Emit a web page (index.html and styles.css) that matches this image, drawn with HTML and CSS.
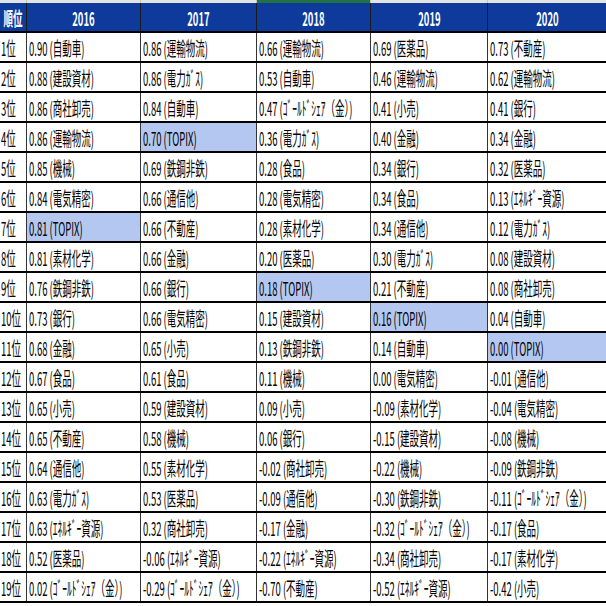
FILE: index.html
```html
<!DOCTYPE html>
<html lang="ja">
<head>
<meta charset="utf-8">
<title>順位表</title>
<link rel="stylesheet" href="styles.css">
</head>
<body>
<div class="sheet">
  <div class="row strip">
    <div class="c"></div><div class="c"></div><div class="c"></div><div class="c sel"></div><div class="c"></div><div class="c"></div>
  </div>
  <div class="row head">
    <div class="c"><span class="t">順位</span></div>
    <div class="c"><span class="t">2016</span></div>
    <div class="c"><span class="t">2017</span></div>
    <div class="c"><span class="t">2018</span></div>
    <div class="c"><span class="t">2019</span></div>
    <div class="c"><span class="t">2020</span></div>
  </div>
  <div class="row"><div class="c rk"><span class="t">1位</span></div><div class="c"><span class="t">0.90 (自動車)</span></div><div class="c"><span class="t">0.86 (運輸物流)</span></div><div class="c"><span class="t">0.66 (運輸物流)</span></div><div class="c"><span class="t">0.69 (医薬品)</span></div><div class="c"><span class="t">0.73 (不動産)</span></div></div>
  <div class="row"><div class="c rk"><span class="t">2位</span></div><div class="c"><span class="t">0.88 (建設資材)</span></div><div class="c"><span class="t">0.86 (電力ｶﾞｽ)</span></div><div class="c"><span class="t">0.53 (自動車)</span></div><div class="c"><span class="t">0.46 (運輸物流)</span></div><div class="c"><span class="t">0.62 (運輸物流)</span></div></div>
  <div class="row"><div class="c rk"><span class="t">3位</span></div><div class="c"><span class="t">0.86 (商社卸売)</span></div><div class="c"><span class="t">0.84 (自動車)</span></div><div class="c"><span class="t">0.47 (ｺﾞｰﾙﾄﾞｼｪｱ（金）)</span></div><div class="c"><span class="t">0.41 (小売)</span></div><div class="c"><span class="t">0.41 (銀行)</span></div></div>
  <div class="row"><div class="c rk"><span class="t">4位</span></div><div class="c"><span class="t">0.86 (運輸物流)</span></div><div class="c hl"><span class="t">0.70 (TOPIX)</span></div><div class="c"><span class="t">0.36 (電力ｶﾞｽ)</span></div><div class="c"><span class="t">0.40 (金融)</span></div><div class="c"><span class="t">0.34 (金融)</span></div></div>
  <div class="row"><div class="c rk"><span class="t">5位</span></div><div class="c"><span class="t">0.85 (機械)</span></div><div class="c"><span class="t">0.69 (鉄鋼非鉄)</span></div><div class="c"><span class="t">0.28 (食品)</span></div><div class="c"><span class="t">0.34 (銀行)</span></div><div class="c"><span class="t">0.32 (医薬品)</span></div></div>
  <div class="row"><div class="c rk"><span class="t">6位</span></div><div class="c"><span class="t">0.84 (電気精密)</span></div><div class="c"><span class="t">0.66 (通信他)</span></div><div class="c"><span class="t">0.28 (電気精密)</span></div><div class="c"><span class="t">0.34 (食品)</span></div><div class="c"><span class="t">0.13 (ｴﾈﾙｷﾞｰ資源)</span></div></div>
  <div class="row"><div class="c rk"><span class="t">7位</span></div><div class="c hl"><span class="t">0.81 (TOPIX)</span></div><div class="c"><span class="t">0.66 (不動産)</span></div><div class="c"><span class="t">0.28 (素材化学)</span></div><div class="c"><span class="t">0.34 (通信他)</span></div><div class="c"><span class="t">0.12 (電力ｶﾞｽ)</span></div></div>
  <div class="row"><div class="c rk"><span class="t">8位</span></div><div class="c"><span class="t">0.81 (素材化学)</span></div><div class="c"><span class="t">0.66 (金融)</span></div><div class="c"><span class="t">0.20 (医薬品)</span></div><div class="c"><span class="t">0.30 (電力ｶﾞｽ)</span></div><div class="c"><span class="t">0.08 (建設資材)</span></div></div>
  <div class="row"><div class="c rk"><span class="t">9位</span></div><div class="c"><span class="t">0.76 (鉄鋼非鉄)</span></div><div class="c"><span class="t">0.66 (銀行)</span></div><div class="c hl"><span class="t">0.18 (TOPIX)</span></div><div class="c"><span class="t">0.21 (不動産)</span></div><div class="c"><span class="t">0.08 (商社卸売)</span></div></div>
  <div class="row"><div class="c rk"><span class="t">10位</span></div><div class="c"><span class="t">0.73 (銀行)</span></div><div class="c"><span class="t">0.66 (電気精密)</span></div><div class="c"><span class="t">0.15 (建設資材)</span></div><div class="c hl"><span class="t">0.16 (TOPIX)</span></div><div class="c"><span class="t">0.04 (自動車)</span></div></div>
  <div class="row"><div class="c rk"><span class="t">11位</span></div><div class="c"><span class="t">0.68 (金融)</span></div><div class="c"><span class="t">0.65 (小売)</span></div><div class="c"><span class="t">0.13 (鉄鋼非鉄)</span></div><div class="c"><span class="t">0.14 (自動車)</span></div><div class="c hl"><span class="t">0.00 (TOPIX)</span></div></div>
  <div class="row"><div class="c rk"><span class="t">12位</span></div><div class="c"><span class="t">0.67 (食品)</span></div><div class="c"><span class="t">0.61 (食品)</span></div><div class="c"><span class="t">0.11 (機械)</span></div><div class="c"><span class="t">0.00 (電気精密)</span></div><div class="c"><span class="t">-0.01 (通信他)</span></div></div>
  <div class="row"><div class="c rk"><span class="t">13位</span></div><div class="c"><span class="t">0.65 (小売)</span></div><div class="c"><span class="t">0.59 (建設資材)</span></div><div class="c"><span class="t">0.09 (小売)</span></div><div class="c"><span class="t">-0.09 (素材化学)</span></div><div class="c"><span class="t">-0.04 (電気精密)</span></div></div>
  <div class="row"><div class="c rk"><span class="t">14位</span></div><div class="c"><span class="t">0.65 (不動産)</span></div><div class="c"><span class="t">0.58 (機械)</span></div><div class="c"><span class="t">0.06 (銀行)</span></div><div class="c"><span class="t">-0.15 (建設資材)</span></div><div class="c"><span class="t">-0.08 (機械)</span></div></div>
  <div class="row"><div class="c rk"><span class="t">15位</span></div><div class="c"><span class="t">0.64 (通信他)</span></div><div class="c"><span class="t">0.55 (素材化学)</span></div><div class="c"><span class="t">-0.02 (商社卸売)</span></div><div class="c"><span class="t">-0.22 (機械)</span></div><div class="c"><span class="t">-0.09 (鉄鋼非鉄)</span></div></div>
  <div class="row"><div class="c rk"><span class="t">16位</span></div><div class="c"><span class="t">0.63 (電力ｶﾞｽ)</span></div><div class="c"><span class="t">0.53 (医薬品)</span></div><div class="c"><span class="t">-0.09 (通信他)</span></div><div class="c"><span class="t">-0.30 (鉄鋼非鉄)</span></div><div class="c"><span class="t">-0.11 (ｺﾞｰﾙﾄﾞｼｪｱ（金）)</span></div></div>
  <div class="row"><div class="c rk"><span class="t">17位</span></div><div class="c"><span class="t">0.63 (ｴﾈﾙｷﾞｰ資源)</span></div><div class="c"><span class="t">0.32 (商社卸売)</span></div><div class="c"><span class="t">-0.17 (金融)</span></div><div class="c"><span class="t">-0.32 (ｺﾞｰﾙﾄﾞｼｪｱ（金）)</span></div><div class="c"><span class="t">-0.17 (食品)</span></div></div>
  <div class="row"><div class="c rk"><span class="t">18位</span></div><div class="c"><span class="t">0.52 (医薬品)</span></div><div class="c"><span class="t">-0.06 (ｴﾈﾙｷﾞｰ資源)</span></div><div class="c"><span class="t">-0.22 (ｴﾈﾙｷﾞｰ資源)</span></div><div class="c"><span class="t">-0.34 (商社卸売)</span></div><div class="c"><span class="t">-0.17 (素材化学)</span></div></div>
  <div class="row"><div class="c rk"><span class="t">19位</span></div><div class="c"><span class="t">0.02 (ｺﾞｰﾙﾄﾞｼｪｱ（金）)</span></div><div class="c"><span class="t">-0.29 (ｺﾞｰﾙﾄﾞｼｪｱ（金）)</span></div><div class="c"><span class="t">-0.70 (不動産)</span></div><div class="c"><span class="t">-0.52 (ｴﾈﾙｷﾞｰ資源)</span></div><div class="c"><span class="t">-0.42 (小売)</span></div></div>
</div>
</body>
</html>
```

FILE: styles.css
```css
html, body {
  margin: 0;
  padding: 0;
  background: #ffffff;
  overflow: hidden;
}

.sheet {
  width: 606px;
  font-family: "Noto Sans CJK JP", "Noto Sans", sans-serif;
  font-size: 19px;
  color: #000000;
}

.row {
  display: grid;
  grid-template-columns: 27px 114px 116px 114px 117px minmax(0, 1fr);
  height: 30px;
  box-sizing: border-box;
  border-bottom: 2px solid #000000;
}

.c {
  box-sizing: border-box;
  border-right: 1px solid #333333;
  overflow: hidden;
  white-space: nowrap;
  padding: 2px 0 0 2px;
  line-height: 26px;
}

.c:last-child {
  border-right: none;
}

.t {
  display: inline-block;
  transform: scaleX(0.5);
  transform-origin: 0 50%;
}

.rk {
  padding-left: 1px;
}

.hl {
  background: #b4c7f0;
}

.strip {
  height: 3px;
  border-bottom: none;
  background: #e4e4e4;
}

.strip .c {
  padding: 0;
  border-right-color: #c4c4c4;
}

.strip .sel {
  background: #217346;
}

.head {
  background: #0e3b9b;
  color: #ffffff;
  font-weight: 700;
}

.head .c {
  display: flex;
  justify-content: center;
  align-items: flex-start;
  padding-left: 0;
  border-right-color: #1a1a1a;
}

.head .t {
  flex: none;
  transform-origin: 50% 50%;
}
```
